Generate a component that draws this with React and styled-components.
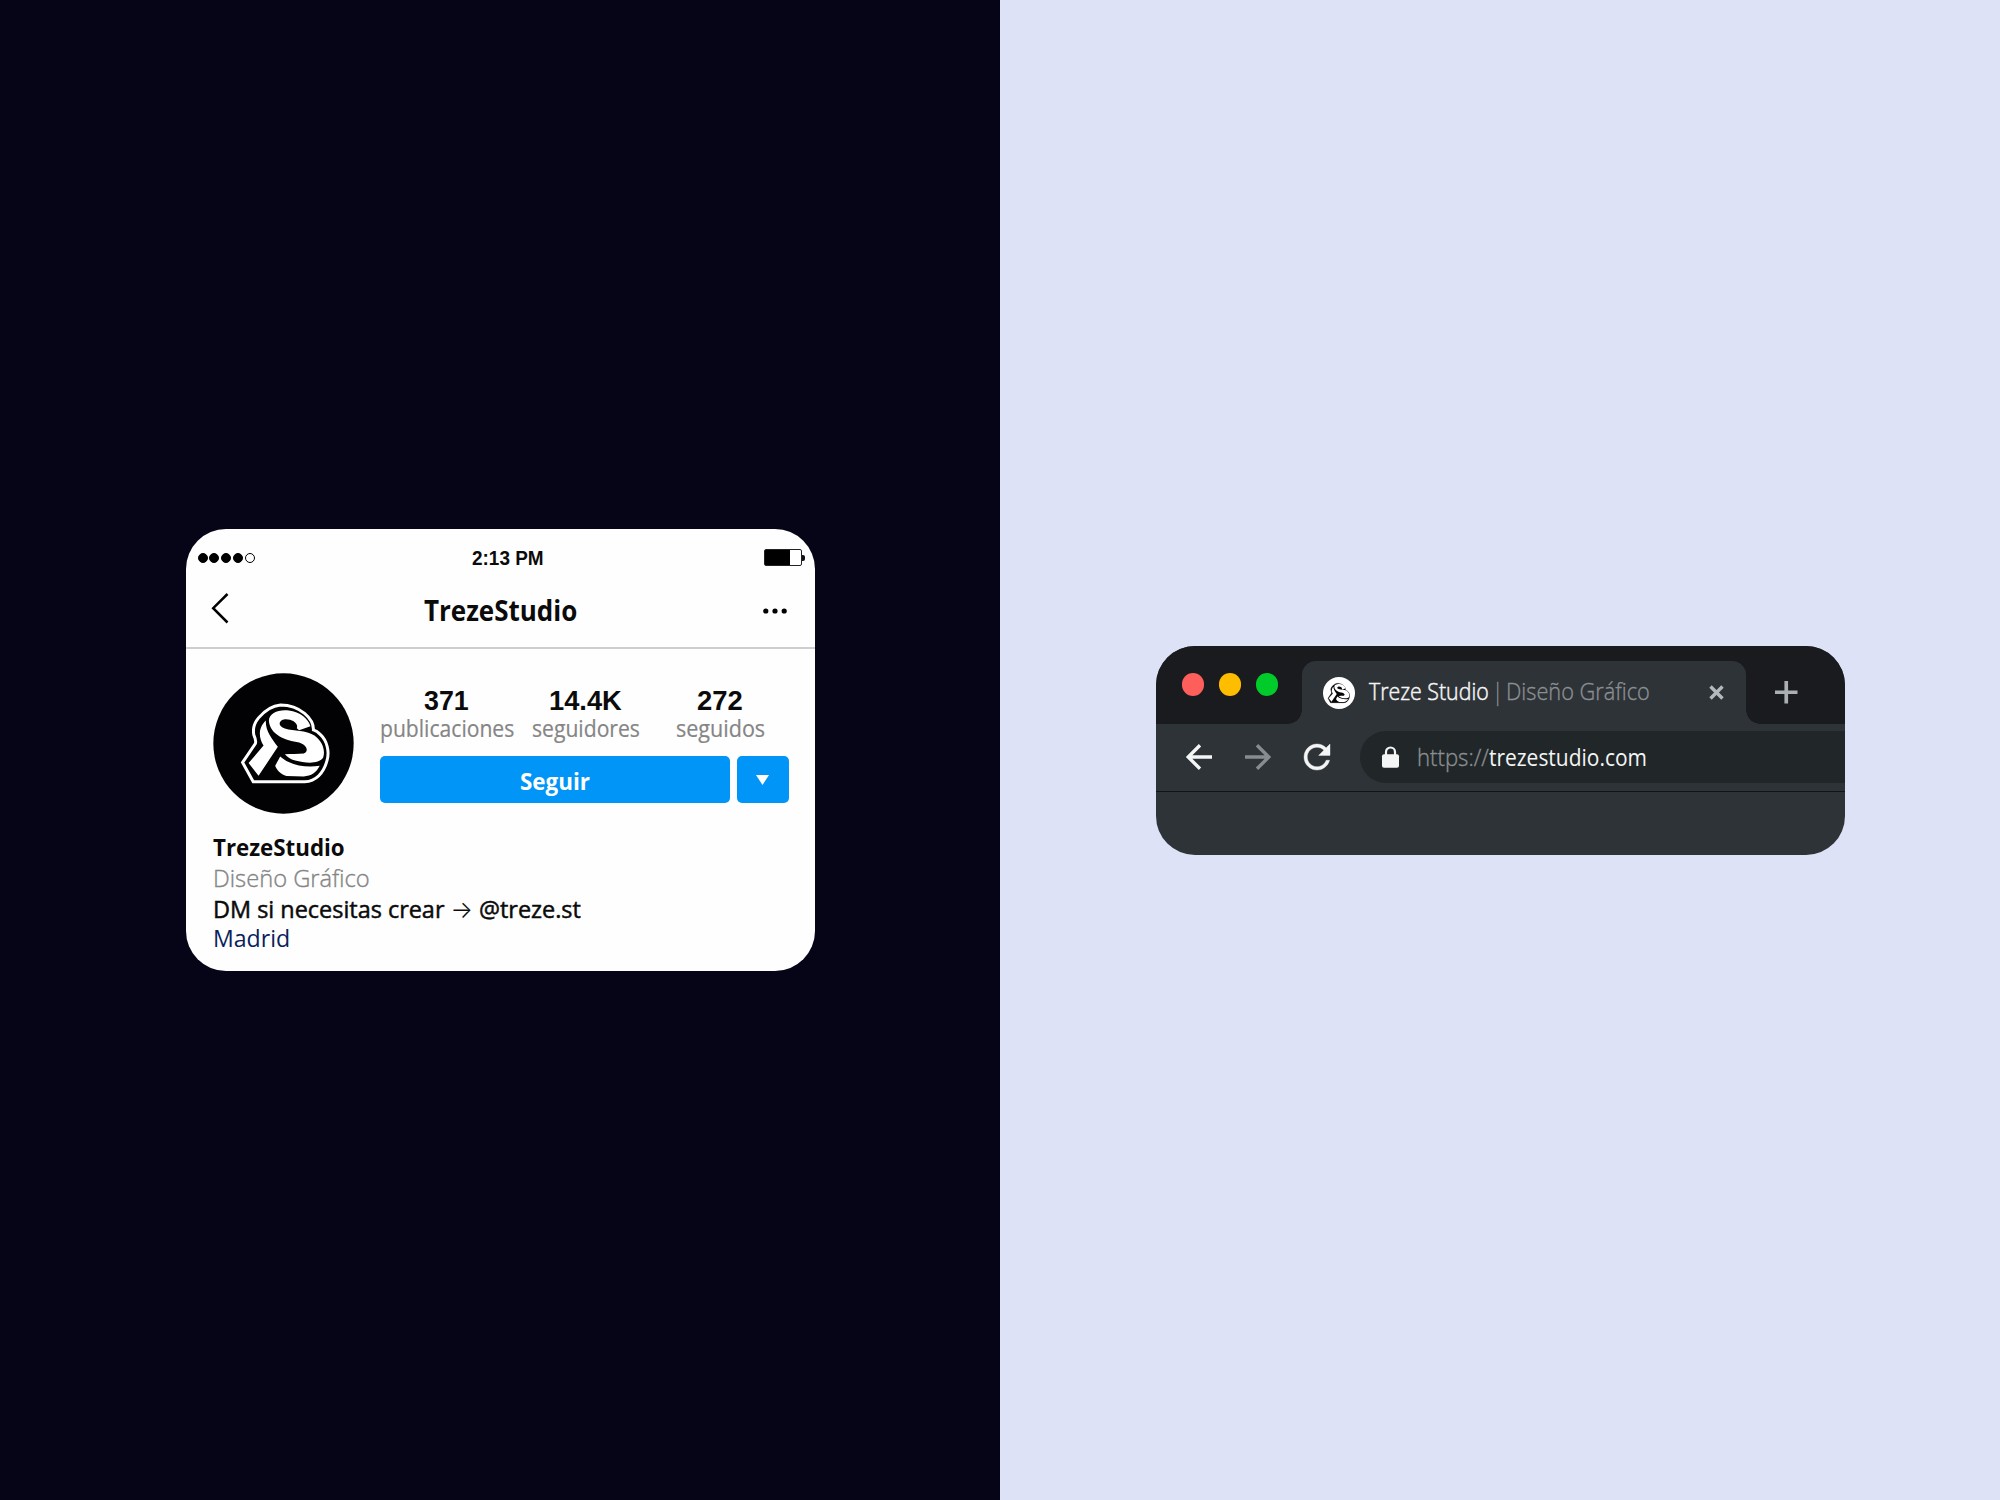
import React, { useLayoutEffect, useRef, useState } from "react";
import styled, { createGlobalStyle } from "styled-components";

const GlobalStyle = createGlobalStyle`
  * { box-sizing: border-box; }
  body { margin: 0; }
`;

const SANS = `"Open Sans", "Noto Sans", sans-serif`;
const ARIAL = `"Liberation Sans", Arial, sans-serif`;

/* ---------- text that is set to an exact measure ---------- */

const Measure = styled.span`
  display: block;
  flex: none;
  width: ${(p) => p.$w}px;
  height: ${(p) => p.$line}px;
  line-height: ${(p) => p.$line}px;
  font-family: ${(p) => p.$family || SANS};
  font-size: ${(p) => p.$size}px;
  font-weight: ${(p) => p.$weight || 400};
  color: ${(p) => p.$color || "#0b0b0b"};
  -webkit-text-stroke: ${(p) => p.$heft || 0}px currentColor;
  white-space: pre;
`;

const Run = styled.span`
  display: inline-block;
  vertical-align: top;
  transform-origin: 0 50%;
`;

const Arrow = styled.span`
  font-family: Inter, sans-serif;
  font-size: 24px;
  font-weight: 300;
  line-height: 1;
  -webkit-text-stroke: 0;
`;

function Fit({ children, ...style }) {
  const ref = useRef(null);
  const [scale, setScale] = useState(1);
  useLayoutEffect(() => {
    setScale(style.$w / ref.current.offsetWidth);
  }, [style.$w]);
  return (
    <Measure {...style}>
      <Run ref={ref} style={{ transform: `scaleX(${scale})` }}>
        {children}
      </Run>
    </Measure>
  );
}

/* ---------- page ---------- */

const Page = styled.main`
  display: grid;
  grid-template-columns: 1fr 1fr;
  width: 2000px;
  height: 1500px;
`;

const Half = styled.section`
  display: flex;
  align-items: center;
  justify-content: center;
  background: ${(p) => p.$bg};
`;

/* ---------- logo ---------- */

const Mark = styled.svg`
  display: block;
  flex: none;
  width: ${(p) => p.$size}px;
  height: ${(p) => p.$size}px;
`;

const OUTLINE =
  "M20 194 L52 252 L207 252 C240 251 264 226 274 188 C282 160 273 128 255 111 C247 103 240 98 233 96 C234 64 194 21 134 21 C110 23 88 36 68 60 C53 78 51 98 54 112 Q62 130 58 138 Z";
const INNER =
  "M31 194 L57 243 L203 243 C232 243 254 222 264 188 C271 162 264 136 248 120 C240 112 229 108 220 106 C229 80 196 31 134 31 C112 33 92 44 75 66 C62 82 60 98 63 110 Q72 128 66 142 Z";
const S_FACE =
  "M99 68 C100 46 128 34 159 38 C193 42 217 62 224 85 L190 97 L183 91 C189 76 168 63 148 64 C126 67 126 86 147 92 C175 101 210 96 236 113 C260 130 270 158 262 180 C248 200 208 196 178 188 C164 184 155 178 147 169 C166 168 186 169 204 167 C220 160 214 142 190 134 C150 128 102 112 99 68 Z";
const S_BASE =
  "M133 176 C162 202 208 211 252 204 C242 224 226 235 204 236 L152 235 C134 230 122 216 118 204 Z";
const STEM = "M90 68 C88 98 108 122 126 147 L68 234 L38 196 L83 143 C70 124 64 92 90 68 Z";

function Avatar({ size }) {
  return (
    <Mark $size={size} viewBox="0 0 424 424">
      <circle cx="212" cy="212" r="211" fill="#020204" />
      <g transform="translate(69 75)">
        <path d={OUTLINE} fill="none" stroke="#fff" strokeWidth="9" />
        <path d={S_FACE} fill="#fff" />
        <path d={S_BASE} fill="#fff" />
        <path d={STEM} fill="#fff" />
      </g>
    </Mark>
  );
}

function Favicon({ size }) {
  return (
    <Mark $size={size} viewBox="0 0 424 424">
      <circle cx="212" cy="212" r="212" fill="#fff" />
      <g transform="translate(31 48) scale(1.2)">
        <path d={INNER} fill="#050505" stroke="#050505" strokeWidth="6" />
        <path d={S_FACE} fill="#fff" />
        <path d={S_BASE} fill="#fff" />
        <path d={STEM} fill="#fff" />
      </g>
    </Mark>
  );
}

/* ---------- profile card ---------- */

const Card = styled.article`
  width: 629px;
  height: 442px;
  border-radius: 40px;
  background: #fefefe;
  overflow: hidden;
`;

const StatusBar = styled.div`
  display: grid;
  grid-template-columns: 274px 1fr auto;
  align-items: center;
  height: 57px;
  padding: 0 9.5px 0 12px;
`;

const Signal = styled.div`
  display: flex;
  gap: 1.8px;
`;

const SignalDot = styled.i`
  width: 10px;
  height: 10px;
  border-radius: 50%;
  border: 1.2px solid #000;
  background: ${(p) => (p.$on ? "#000" : "transparent")};
`;

const Battery = styled.div`
  display: flex;
  align-items: center;
`;

const BatteryCell = styled.div`
  width: 38px;
  height: 17px;
  border: 1px solid #222;
  border-radius: 2px;
  background: linear-gradient(90deg, #000 25px, #fff 25px);
`;

const BatteryTip = styled.div`
  width: 3px;
  height: 6px;
  border-radius: 0 2px 2px 0;
  background: #111;
`;

const NavBar = styled.header`
  display: grid;
  grid-template-columns: 213px 1fr auto;
  align-items: center;
  height: 63px;
  padding: 0 28px 13px 25px;
  border-bottom: 2px solid #cecece;
`;

const Icon = styled.svg`
  display: block;
  flex: none;
  width: ${(p) => p.$w}px;
  height: ${(p) => p.$h || p.$w}px;
  overflow: visible;
`;

const Profile = styled.div`
  display: flex;
  gap: 26px;
  padding: 24px 25px 0 27px;
`;

const Summary = styled.div`
  flex: 1;
  padding-top: 14px;
`;

const Stats = styled.div`
  display: flex;
`;

const Stat = styled.div`
  display: flex;
  flex-direction: column;
  align-items: center;
  margin-right: ${(p) => p.$after || 0}px;
`;

const Actions = styled.div`
  display: flex;
  gap: 7px;
  margin-top: 14px;
`;

const Button = styled.button`
  display: flex;
  align-items: center;
  justify-content: center;
  width: ${(p) => p.$w}px;
  height: 47px;
  padding: ${(p) => p.$drop || 0}px 0 0;
  border: 0;
  border-radius: 5px;
  background: #0095f6;
`;

const Bio = styled.div`
  padding: 17px 27px 0;
`;

const STATS = [
  { value: "371", label: "publicaciones", vw: 45, lw: 134, after: 18 },
  { value: "14.4K", label: "seguidores", vw: 73, lw: 107.5, after: 36.5 },
  { value: "272", label: "seguidos", vw: 46, lw: 89, after: 0 },
];

function ProfileCard() {
  return (
    <Card>
      <StatusBar>
        <Signal>
          {[1, 1, 1, 1, 0].map((on, i) => (
            <SignalDot key={i} $on={on} />
          ))}
        </Signal>
        <Fit $w={72} $size={20} $line={28} $weight={700} $family={ARIAL}>2:13 PM</Fit>
        <Battery>
          <BatteryCell />
          <BatteryTip />
        </Battery>
      </StatusBar>
      <NavBar>
        <Icon $w={18} $h={33} viewBox="0 0 18 33">
          <path d="M16.5 0 L2.2 14.2 L16.5 28.5" fill="none" stroke="#000" strokeWidth="2.5" />
        </Icon>
        <Fit $w={153} $size={28} $line={36} $weight={700}>TrezeStudio</Fit>
        <Icon $w={24} $h={6} viewBox="0 0 24 6">
          <circle cx="2.8" cy="4" r="2.6" />
          <circle cx="12" cy="4" r="2.6" />
          <circle cx="21.2" cy="4" r="2.6" />
        </Icon>
      </NavBar>
      <Profile>
        <Avatar size={141} />
        <Summary>
          <Stats>
            {STATS.map((s) => (
              <Stat key={s.label} $after={s.after}>
                <Fit $w={s.vw} $size={28} $line={28} $weight={700} $family={ARIAL}>{s.value}</Fit>
                <Fit $w={s.lw} $size={23} $line={27} $color="#858585" $heft={0.2}>{s.label}</Fit>
              </Stat>
            ))}
          </Stats>
          <Actions>
            <Button $w={350} $drop={2}>
              <Fit $w={70} $size={24} $line={44} $weight={700} $color="#fff">Seguir</Fit>
            </Button>
            <Button $w={52.5}>
              <Icon $w={13} $h={10} viewBox="0 0 13 10">
                <path d="M0 0 H13 L6.5 10 Z" fill="#fff" />
              </Icon>
            </Button>
          </Actions>
        </Summary>
      </Profile>
      <Bio>
        <Fit $w={132} $size={24} $line={31} $weight={700}>TrezeStudio</Fit>
        <Fit $w={157} $size={24} $line={31} $weight={300} $color="#858585" $heft={0.35}>Diseño Gráfico</Fit>
        <Fit $w={368} $size={24} $line={31} $weight={400} $heft={0.5}>
          DM si necesitas crear <Arrow>→</Arrow> @treze.st
        </Fit>
        <Fit $w={77} $size={24} $line={28} $color="#0a1f5c">Madrid</Fit>
      </Bio>
    </Card>
  );
}

/* ---------- browser window ---------- */

const Window = styled.article`
  width: 689px;
  height: 209px;
  border-radius: 39px;
  background: #2e3337;
  overflow: hidden;
`;

const TabStrip = styled.div`
  display: flex;
  align-items: center;
  height: 78px;
  padding-left: 26px;
  background: #1a1b1f;
`;

const Lights = styled.div`
  display: flex;
  gap: 14.5px;
  width: 120px;
`;

const Light = styled.i`
  width: 22.5px;
  height: 22.5px;
  border-radius: 50%;
  background: ${(p) => p.$c};
`;

const Tab = styled.div`
  position: relative;
  display: flex;
  align-items: center;
  align-self: flex-end;
  width: 444px;
  height: 63px;
  padding: 1px 22px 0 21px;
  border-radius: 14px 14px 0 0;
  background: #2e3337;

  &::before,
  &::after {
    content: "";
    position: absolute;
    bottom: 0;
    width: 14px;
    height: 14px;
  }
  &::before {
    right: 100%;
    background: radial-gradient(circle at 0 0, transparent 13.5px, #2e3337 14px);
  }
  &::after {
    left: 100%;
    background: radial-gradient(circle at 100% 0, transparent 13.5px, #2e3337 14px);
  }
`;

const TabTitle = styled.div`
  display: flex;
  flex: 1;
  margin-left: 14px;
  padding-bottom: 4px;
`;

const NewTab = styled.div`
  margin-left: 29px;
  padding-top: 15px;
`;

const Toolbar = styled.div`
  display: flex;
  align-items: center;
  height: 68px;
  padding-left: 30px;
  border-bottom: 1.5px solid #111517;
`;

const NavButtons = styled.div`
  display: flex;
  align-items: center;
  gap: 33px;
  width: 174px;
`;

const Address = styled.div`
  display: flex;
  align-items: center;
  flex: 1;
  height: 52px;
  padding-left: 22px;
  border-radius: 26px 0 0 26px;
  background: #212729;
`;

const Url = styled.div`
  display: flex;
  margin-left: 18.5px;
`;

function BrowserWindow() {
  return (
    <Window>
      <TabStrip>
        <Lights>
          <Light $c="#ff5f5a" />
          <Light $c="#ffbd00" />
          <Light $c="#00cb2b" />
        </Lights>
        <Tab>
          <Favicon size={32} />
          <TabTitle>
            <Fit $w={120} $size={24} $line={30} $weight={300} $color="#f4f5f6" $heft={0.5}>Treze Studio</Fit>
            <Fit $w={17} $size={24} $line={30} $weight={300} $color="#94979a" $heft={0.4}> | </Fit>
            <Fit $w={144} $size={24} $line={30} $weight={300} $color="#8b8f93" $heft={0.35}>Diseño Gráfico</Fit>
          </TabTitle>
          <Icon $w={15} viewBox="0 0 15 15">
            <path d="M1.5 1.5 L13.5 13.5 M13.5 1.5 L1.5 13.5" stroke="#b3b9bd" strokeWidth="3.4" />
          </Icon>
        </Tab>
        <NewTab>
          <Icon $w={22.5} viewBox="0 0 22 22">
            <path d="M11 0 V22 M0 11 H22" stroke="#a9afb2" strokeWidth="3.6" />
          </Icon>
        </NewTab>
      </TabStrip>
      <Toolbar>
        <NavButtons>
          <Icon $w={26} viewBox="0 0 26 26">
            <path d="M14 1.2 L2.2 13 L14 24.8 M2.2 13 H26" fill="none" stroke="#f4f5f5" strokeWidth="3.4" />
          </Icon>
          <Icon $w={26} viewBox="0 0 26 26">
            <path d="M12 1.2 L23.8 13 L12 24.8 M23.8 13 H0" fill="none" stroke="#888c8f" strokeWidth="3.4" />
          </Icon>
          <Icon $w={26} viewBox="4 4 16 16">
            <path
              d="M17.65 6.35C16.2 4.9 14.21 4 12 4c-4.42 0-7.99 3.58-7.99 8s3.57 8 7.99 8c3.73 0 6.84-2.55 7.73-6h-2.08c-.82 2.33-3.04 4-5.65 4-3.31 0-6-2.69-6-6s2.69-6 6-6c1.66 0 3.14.69 4.22 1.78L13 11h7V4l-2.35 2.35z"
              fill="#f4f5f5"
              stroke="#f4f5f5"
              strokeWidth="0.25"
            />
          </Icon>
        </NavButtons>
        <Address>
          <Icon $w={17} $h={22} viewBox="0 0 17 22">
            <path d="M4 10 V6 A4.5 4.5 0 0 1 13 6 V10" fill="none" stroke="#f4f5f5" strokeWidth="2.2" />
            <rect x="0" y="8.3" width="17" height="13.5" rx="2" fill="#f4f5f5" />
          </Icon>
          <Url>
            <Fit $w={72} $size={24} $line={30} $weight={300} $color="#8b8f93" $heft={0.35}>https://</Fit>
            <Fit $w={158} $size={24} $line={30} $weight={400} $color="#f4f5f5">trezestudio.com</Fit>
          </Url>
        </Address>
      </Toolbar>
    </Window>
  );
}

export default function App() {
  return (
    <>
      <GlobalStyle />
      <Page>
        <Half $bg="#060517">
          <ProfileCard />
        </Half>
        <Half $bg="#dde2f6">
          <BrowserWindow />
        </Half>
      </Page>
    </>
  );
}
